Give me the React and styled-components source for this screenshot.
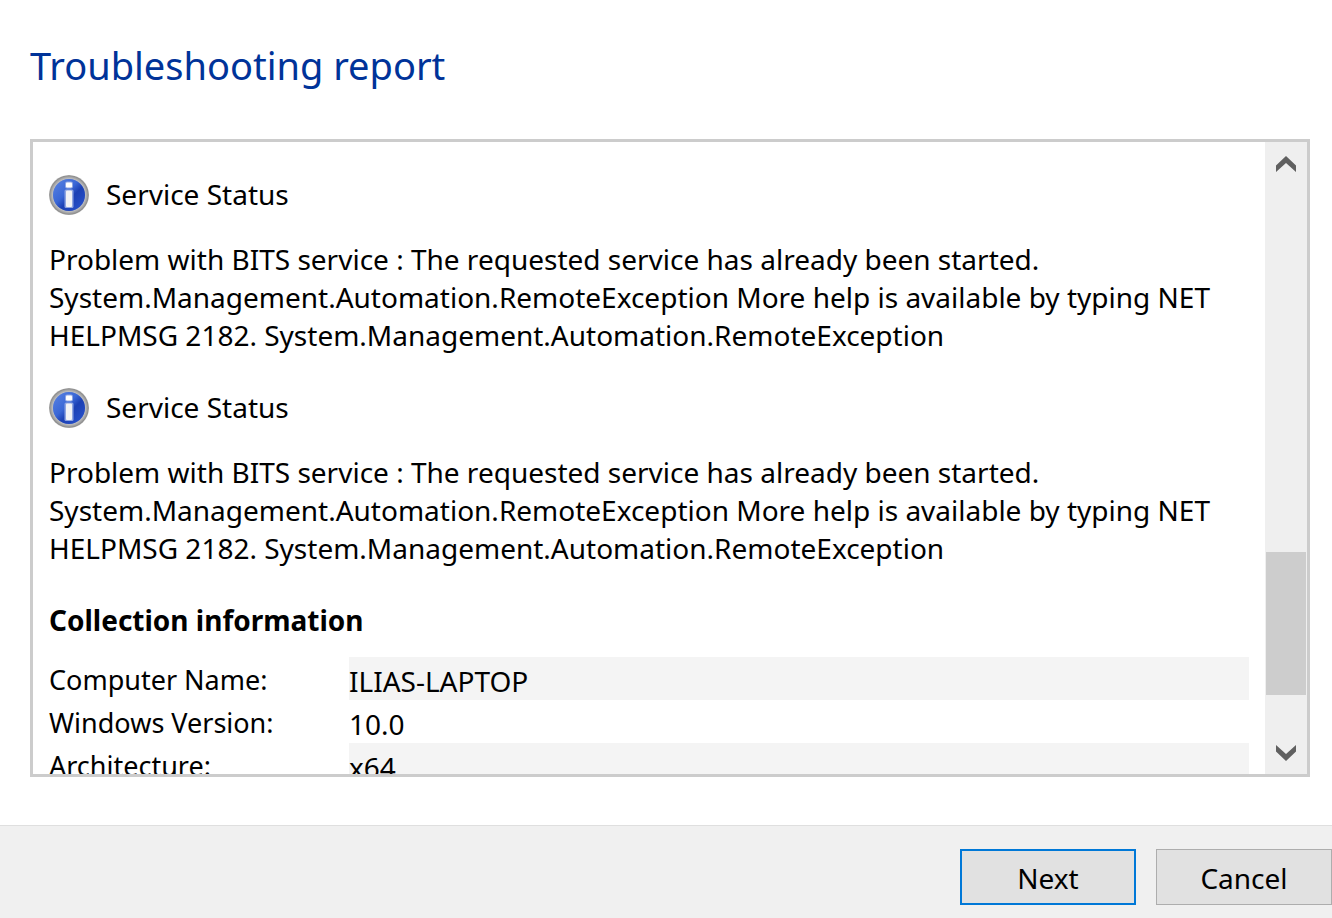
import { useId } from 'react';
import styled, { createGlobalStyle } from 'styled-components';

const GlobalStyle = createGlobalStyle`
  * {
    box-sizing: border-box;
  }

  body {
    margin: 0;
    background: #ffffff;
    color: #000000;
    font-family: "Segoe UI", "Noto Sans", "Open Sans", sans-serif;
    font-size: 28px;
    line-height: 38px;
  }
`;

const Page = styled.div`
  display: flex;
  flex-direction: column;
  height: 100vh;
`;

const Main = styled.main`
  display: flex;
  flex: 1;
  flex-direction: column;
  min-height: 0;
  padding: 37px 22px 48px 30px;
`;

const Title = styled.h1`
  margin: 0 0 46px;
  color: #003399;
  font-size: 38px;
  font-weight: 400;
  line-height: 56px;
`;

const ReportPanel = styled.div`
  display: flex;
  flex: 1;
  min-height: 0;
  border: 3px solid #cccccc;
`;

const Report = styled.div`
  flex: 1;
  min-width: 0;
  overflow: hidden;
  padding: 33px 16px 0;
`;

const Entry = styled.section`
  margin-bottom: 34px;
`;

const EntryHeader = styled.div`
  display: flex;
  align-items: center;
  gap: 17px;
  height: 40px;
  margin-bottom: 25px;
`;

const EntryTitle = styled.h2`
  margin: 0;
  padding-bottom: 2px;
  font-size: 28px;
  font-weight: 400;
`;

const EntryText = styled.p`
  margin: 0;
`;

const SectionTitle = styled.h2`
  margin: 0 0 18px;
  font-size: 28px;
  font-weight: 700;
`;

const InfoTable = styled.table`
  width: 100%;
  border-collapse: collapse;
  table-layout: fixed;
`;

const InfoLabel = styled.th`
  width: 25%;
  height: 43px;
  padding: 2px 0 0;
  font-size: 27px;
  font-weight: 400;
  text-align: left;
`;

const InfoValue = styled.td`
  height: 43px;
  padding: 5px 0 0;
  background: ${({ $shaded }) => ($shaded ? '#f4f4f4' : 'transparent')};
`;

const ScrollBar = styled.div`
  display: flex;
  flex-direction: column;
  width: 42px;
  background: #efefef;
`;

const ScrollButton = styled.button`
  display: flex;
  align-items: center;
  justify-content: center;
  height: 43px;
  padding: 0;
  border: 0;
  background: transparent;
`;

const ScrollTrack = styled.div`
  display: flex;
  flex: 1;
  flex-direction: column;
  padding: 0 1px;
`;

const ScrollSpace = styled.div`
  flex: ${({ $size }) => $size} 0 0;
`;

const ScrollThumb = styled.div`
  flex: ${({ $size }) => $size} 0 0;
  background: #cdcdcd;
`;

const Footer = styled.footer`
  display: flex;
  justify-content: flex-end;
  gap: 20px;
  padding: 23px 0 13px;
  border-top: 1px solid #dfdfdf;
  background: #f0f0f0;
`;

const DialogButton = styled.button`
  width: 176px;
  height: 56px;
  padding: 2px 0 0;
  border: ${({ $primary }) => ($primary ? '2px solid #0078d7' : '1px solid #adadad')};
  background: #e1e1e1;
  color: #000000;
  font-family: inherit;
  font-size: 28px;
`;

const entries = [
  {
    id: 1,
    title: 'Service Status',
    text: 'Problem with BITS service : The requested service has already been started. System.Management.Automation.RemoteException More help is available by typing NET HELPMSG 2182. System.Management.Automation.RemoteException',
  },
  {
    id: 2,
    title: 'Service Status',
    text: 'Problem with BITS service : The requested service has already been started. System.Management.Automation.RemoteException More help is available by typing NET HELPMSG 2182. System.Management.Automation.RemoteException',
  },
];

const info = [
  { label: 'Computer Name:', value: 'ILIAS-LAPTOP' },
  { label: 'Windows Version:', value: '10.0' },
  { label: 'Architecture:', value: 'x64' },
];

const InfoIcon = () => {
  const id = useId();

  return (
    <svg width="40" height="40" viewBox="0 0 40 40" aria-hidden="true">
      <defs>
        <radialGradient id={`${id}-ring`} cx="20" cy="20" r="20" gradientUnits="userSpaceOnUse">
          <stop offset="0.76" stopColor="#8f9cc4" />
          <stop offset="0.82" stopColor="#bcbcbe" />
          <stop offset="0.9" stopColor="#a4a4a4" />
          <stop offset="0.96" stopColor="#8e8e8e" />
          <stop offset="1" stopColor="#b4b4b4" />
        </radialGradient>
        <linearGradient id={`${id}-ball`} x1="0" y1="0" x2="1" y2="1">
          <stop offset="0" stopColor="#5b84e2" />
          <stop offset="0.42" stopColor="#3a67d6" />
          <stop offset="0.58" stopColor="#1c40b4" />
          <stop offset="1" stopColor="#2a55d0" />
        </linearGradient>
      </defs>
      <circle cx="20" cy="20" r="20" fill={`url(#${id}-ring)`} />
      <circle cx="20" cy="20" r="16" fill={`url(#${id}-ball)`} />
      <rect x="15.5" y="14.5" width="9" height="18.5" rx="1.5" fill="#8fa5e2" />
      <rect x="16" y="6.5" width="8" height="7" rx="2" fill="#8fa5e2" />
      <rect x="17" y="7.5" width="6" height="5" rx="1" fill="#ffffff" />
      <rect x="17" y="15.5" width="6" height="16.5" rx="1" fill="#f2f2f4" />
    </svg>
  );
};

const Chevron = ({ down }) => (
  <svg width="20" height="16" viewBox="0 0 20 16" aria-hidden="true">
    <path
      d={down ? 'M0 0 L10 9 L20 0 V6.5 L10 16 L0 6.5 Z' : 'M0 16 L10 7 L20 16 V9.5 L10 0 L0 9.5 Z'}
      fill="#606060"
    />
  </svg>
);

const App = () => {
  return (
    <>
      <GlobalStyle />
      <Page>
        <Main>
          <Title>Troubleshooting report</Title>
          <ReportPanel>
            <Report>
              {entries.map((entry) => (
                <Entry key={entry.id}>
                  <EntryHeader>
                    <InfoIcon />
                    <EntryTitle>{entry.title}</EntryTitle>
                  </EntryHeader>
                  <EntryText>{entry.text}</EntryText>
                </Entry>
              ))}
              <SectionTitle>Collection information</SectionTitle>
              <InfoTable>
                <tbody>
                  {info.map((row, index) => (
                    <tr key={row.label}>
                      <InfoLabel scope="row">{row.label}</InfoLabel>
                      <InfoValue $shaded={index % 2 === 0}>{row.value}</InfoValue>
                    </tr>
                  ))}
                </tbody>
              </InfoTable>
            </Report>
            <ScrollBar>
              <ScrollButton type="button" aria-label="Scroll up">
                <Chevron />
              </ScrollButton>
              <ScrollTrack>
                <ScrollSpace $size={367} />
                <ScrollThumb $size={143} />
                <ScrollSpace $size={36} />
              </ScrollTrack>
              <ScrollButton type="button" aria-label="Scroll down">
                <Chevron down />
              </ScrollButton>
            </ScrollBar>
          </ReportPanel>
        </Main>
        <Footer>
          <DialogButton type="button" $primary>Next</DialogButton>
          <DialogButton type="button">Cancel</DialogButton>
        </Footer>
      </Page>
    </>
  );
};

export default App;
